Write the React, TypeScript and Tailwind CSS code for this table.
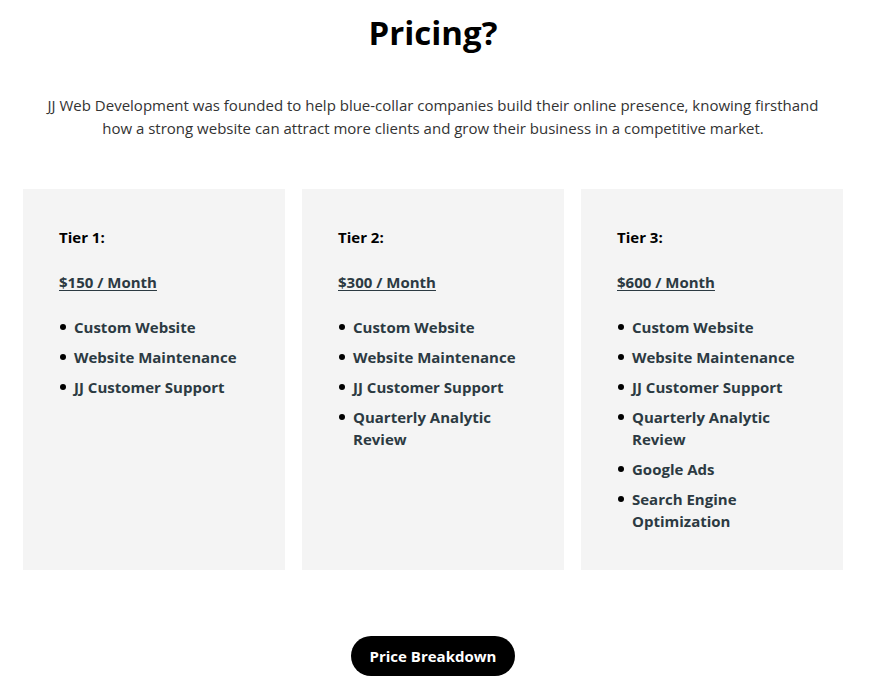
import React from "react";

const tiers = [
  {
    name: "Tier 1:",
    price: "$150 / Month",
    items: ["Custom Website", "Website Maintenance", "JJ Customer Support"],
  },
  {
    name: "Tier 2:",
    price: "$300 / Month",
    items: [
      "Custom Website",
      "Website Maintenance",
      "JJ Customer Support",
      "Quarterly Analytic Review",
    ],
  },
  {
    name: "Tier 3:",
    price: "$600 / Month",
    items: [
      "Custom Website",
      "Website Maintenance",
      "JJ Customer Support",
      "Quarterly Analytic Review",
      "Google Ads",
      "Search Engine Optimization",
    ],
  },
];

export default function App() {
  return (
    <div className="min-h-[678px] bg-white font-['Open_Sans',sans-serif]">
      <div className="w-[866px]">
        <h1 className="pt-[8px] text-center text-[33px] font-bold leading-[50px] text-black">
          Pricing?
        </h1>

        <p className="mx-auto mt-[36px] w-[790px] text-center text-[15px] leading-[23px] text-[#333]">
          JJ Web Development was founded to help blue-collar companies build their online presence, knowing firsthand
          how a strong website can attract more clients and grow their business in a competitive market.
        </p>

        {/* tiers */}
        <section className="mx-auto mt-[49px] grid w-[820px] grid-cols-3 gap-[17px]">
          {tiers.map((t) => (
            <div key={t.name} className="h-[381px] bg-[#f4f4f4] pl-[36px] pr-[24px] pt-[37px]">
              <h3 className="text-[15px] font-bold leading-[22px] text-black">{t.name}</h3>
              <div className="mt-[23px] text-[15px] font-bold leading-[22px] text-[#2c3a42] underline underline-offset-2">
                {t.price}
              </div>
              <ul className="mt-[23px] space-y-[8px]">
                {t.items.map((item) => (
                  <li key={item} className="flex text-[15px] font-bold leading-[22px] text-[#2c3a42]">
                    <span className="mt-[8px] mr-[8px] ml-[1px] h-[6px] w-[6px] shrink-0 rounded-full bg-black" />
                    <span className="max-w-[170px]">{item}</span>
                  </li>
                ))}
              </ul>
            </div>
          ))}
        </section>

        <div className="mt-[66px] flex justify-center">
          <button className="h-[40px] w-[164px] rounded-full bg-black text-[15px] font-bold text-white">
            Price Breakdown
          </button>
        </div>
      </div>
    </div>
  );
}
